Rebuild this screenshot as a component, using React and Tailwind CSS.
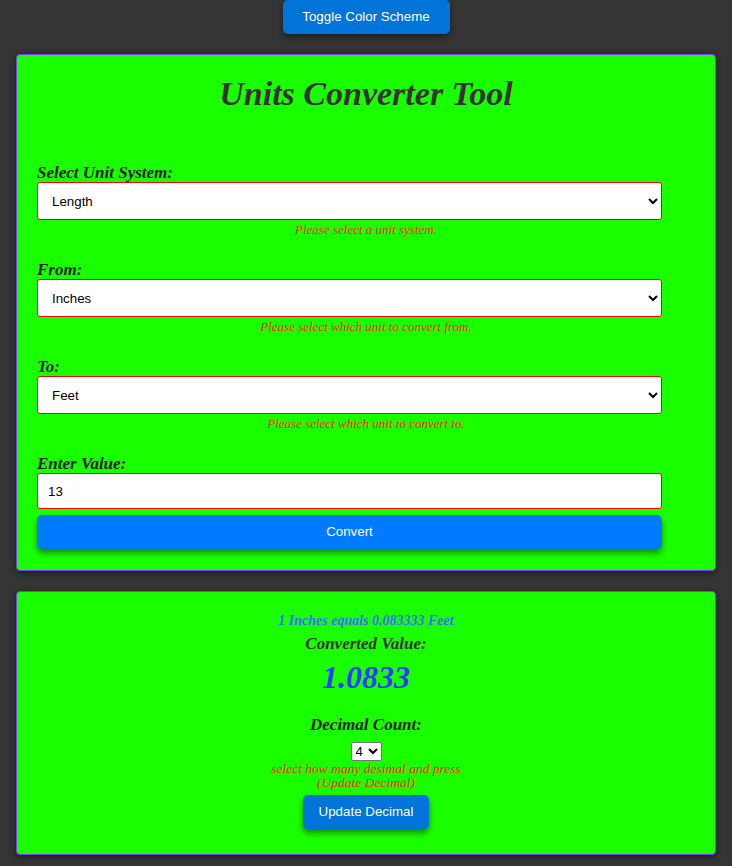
import React, { useState } from "react";

const serif = { fontFamily: '"Liberation Serif", "Times New Roman", serif' };

function Field({ label, children, error }) {
  return (
    <div className="flex flex-col">
      <label className="text-[17px] leading-[18px] font-bold italic text-[#1a1a1a]" style={serif}>{label}</label>
      {children}
      {error && (
        <div className="w-[658px] text-center text-[13px] leading-[14px] italic text-[#ff1a00] mt-[3px]" style={serif}>{error}</div>
      )}
    </div>
  );
}

export default function App() {
  const [sys, setSys] = useState("Length");
  const [from, setFrom] = useState("Inches");
  const [to, setTo] = useState("Feet");
  const [val, setVal] = useState("13");
  const [dec, setDec] = useState("4");
  const selCls =
    "w-[625px] h-[38px] bg-white border border-[#ff0000] rounded-[3px] pl-[10px] text-[13.33px] text-black outline-none";
  return (
    <div className="min-h-[866px] bg-[#353535] flex flex-col items-center" style={{ fontFamily: '"Liberation Sans", Arial, sans-serif' }}>
      <button className="w-[167px] h-[34px] bg-[#0074d9] text-white text-[13.33px] rounded-[5px] shadow-[0_3px_6px_rgba(0,0,0,0.45)]">
        Toggle Color Scheme
      </button>

      <div className="mt-[20px] w-[700px] h-[517px] bg-[#1aff00] border border-[#7a3cff] rounded-[4px] shadow-[0_2px_6px_rgba(0,0,0,0.5)] px-[20px]">
        <h1 className="text-center text-[34px] leading-[37px] font-bold italic text-[#333] mt-[20px]" style={serif}>
          Units Converter Tool
        </h1>
        <div className="mt-[52px] flex flex-col gap-[24px]">
          <Field label="Select Unit System:" error="Please select a unit system.">
            <select className={selCls} value={sys} onChange={(e) => setSys(e.target.value)}>
              <option>Length</option>
              <option>Weight</option>
            </select>
          </Field>
          <Field label="From:" error="Please select which unit to convert from.">
            <select className={selCls} value={from} onChange={(e) => setFrom(e.target.value)}>
              <option>Inches</option>
              <option>Feet</option>
            </select>
          </Field>
          <Field label="To:" error="Please select which unit to convert to.">
            <select className={selCls} value={to} onChange={(e) => setTo(e.target.value)}>
              <option>Feet</option>
              <option>Inches</option>
            </select>
          </Field>
          <Field label="Enter Value:">
            <input
              className="w-[625px] h-[36px] bg-white border border-[#ff0000] rounded-[3px] px-[10px] text-[13.33px] text-black outline-none"
              value={val}
              onChange={(e) => setVal(e.target.value)}
            />
            <button className="w-[625px] h-[34px] mt-[6px] bg-[#007bff] text-white text-[13.33px] rounded-[5px] shadow-[0_4px_6px_rgba(0,0,0,0.45)]">
              Convert
            </button>
          </Field>
        </div>
      </div>

      <div className="mt-[20px] w-[700px] h-[264px] bg-[#1aff00] border border-[#7a3cff] rounded-[4px] shadow-[0_2px_6px_rgba(0,0,0,0.5)] flex flex-col items-center">
        <div className="mt-[21px] text-[14px] leading-[16px] font-bold italic text-[#3a6cff]" style={serif}>
          1 Inches equals 0.083333 Feet
        </div>
        <div className="mt-[5px] text-[17px] leading-[20px] font-bold italic text-[#333]" style={serif}>
          Converted Value:
        </div>
        <div className="mt-[5px] text-[32px] leading-[36px] font-bold italic text-[#2a3cff]" style={serif}>
          1.0833
        </div>
        <div className="mt-[20px] text-[17px] leading-[20px] font-bold italic text-[#1a1a1a]" style={serif}>
          Decimal Count:
        </div>
        <select
          className="mt-[7px] h-[19px] w-[31px] bg-white border border-[#767676] rounded-[2px] text-[13px] text-black"
          value={dec}
          onChange={(e) => setDec(e.target.value)}
        >
          <option>1</option>
          <option>2</option>
          <option>3</option>
          <option>4</option>
        </select>
        <div className="mt-[1px] text-center text-[13.5px] leading-[14px] italic text-[#ff1a00]" style={serif}>
          select how many desimal and press
          <br />
          (Update Decimal)
        </div>
        <button className="mt-[5px] w-[126px] h-[34px] bg-[#0074d9] text-white text-[13.33px] rounded-[5px] shadow-[0_4px_6px_rgba(0,0,0,0.45)]">
          Update Decimal
        </button>
      </div>
    </div>
  );
}
